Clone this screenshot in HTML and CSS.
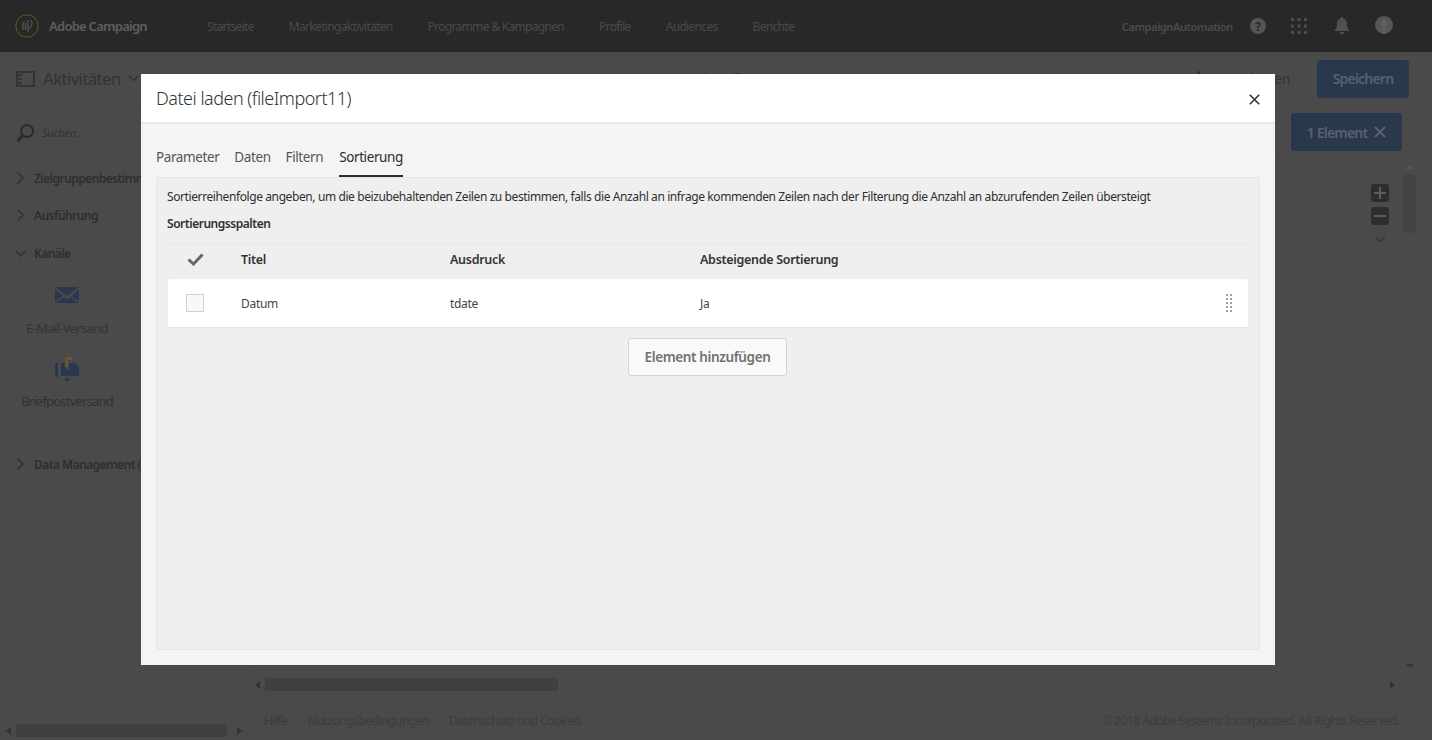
FILE: index.html
```html
<!DOCTYPE html>
<html lang="de">
<head>
<meta charset="utf-8">
<title>Adobe Campaign</title>
<link rel="stylesheet" href="styles.css">
</head>
<body>
<div class="app">
  <header class="topbar">
    <div class="brand">
      <svg class="logo" width="24" height="24" viewBox="0 0 24 24" fill="none"><circle cx="12" cy="12" r="11.200" stroke="#5a5f20" stroke-width="1"/><path d="M8 16V10c0-1.500 1-2.500 2-3M10.500 16V9M13 18V6M15 6c2 1 2.500 3 1.500 5.500S14 15 13 15" stroke="#5e5e5e" stroke-width="1"/></svg>
      <span class="brand-name">Adobe Campaign</span>
    </div>
    <nav class="mainnav">
      <span>Startseite</span><span>Marketingaktivitäten</span><span>Programme &amp; Kampagnen</span><span>Profile</span><span>Audiences</span><span>Berichte</span>
    </nav>
    <div class="top-right">
      <span class="org">CampaignAutomation</span>
      <span class="help">?</span>
      <svg class="grid-ic" width="16" height="16" viewBox="0 0 16 16" fill="#4c4c4c"><rect x="0" y="0" width="3" height="3"/><rect x="6.500" y="0" width="3" height="3"/><rect x="13" y="0" width="3" height="3"/><rect x="0" y="6.500" width="3" height="3"/><rect x="6.500" y="6.500" width="3" height="3"/><rect x="13" y="6.500" width="3" height="3"/><rect x="0" y="13" width="3" height="3"/><rect x="6.500" y="13" width="3" height="3"/><rect x="13" y="13" width="3" height="3"/></svg>
      <svg class="bell" width="16" height="18" viewBox="0 0 16 18" fill="#505050"><path d="M8 0c1 0 1.500.7 1.500 1.500C12 2.300 13 4.500 13 7c0 3 1 5 3 7H0c2-2 3-4 3-7 0-2.500 1-4.700 3.500-5.500C6.500.7 7 0 8 0zM6 15h4c0 1.500-1 2.500-2 2.500S6 16.500 6 15z"/></svg>
      <svg class="avatar" width="18" height="18" viewBox="0 0 18 18"><circle cx="9" cy="9" r="9" fill="#555"/><path d="M9 3.500c2 0 3 1.500 3 3.500 0 2-1 4-3 4S6 9 6 7c0-2 1-3.500 3-3.500zM7.500 11.500h3V18h-3z" fill="#606060"/></svg>
    </div>
  </header>

  <div class="workspace">
    <aside class="sidebar">
      <div class="side-head">
        <svg width="20" height="16" viewBox="0 0 20 16" fill="none"><rect x="1" y="1" width="17" height="14" stroke="#333" stroke-width="2"/><path d="M2 4h4M2 8h4M2 12h4" stroke="#333" stroke-width="2"/></svg>
        <span class="side-title">Aktivitäten</span>
        <svg width="11" height="7" viewBox="0 0 11 7" fill="none"><path d="M1 1l4.500 4.500L10 1" stroke="#333" stroke-width="1.500"/></svg>
      </div>
      <div class="search">
        <svg width="19" height="19" viewBox="0 0 19 19" fill="none"><circle cx="11" cy="8" r="6" stroke="#2b2b2b" stroke-width="2"/><path d="M7 12.500L1.500 18" stroke="#2b2b2b" stroke-width="3"/></svg>
        <span>Suchen...</span>
      </div>
      <div class="group"><svg class="chev" width="9" height="14" viewBox="0 0 9 14" fill="none"><path d="M1.500 1.500L7 7l-5.500 5.500" stroke="#333" stroke-width="1.600"/></svg><span>Zielgruppenbestimmung</span></div>
      <div class="group"><svg class="chev" width="9" height="14" viewBox="0 0 9 14" fill="none"><path d="M1.500 1.500L7 7l-5.500 5.500" stroke="#333" stroke-width="1.600"/></svg><span>Ausführung</span></div>
      <div class="group"><svg class="chev-d" width="13" height="9" viewBox="0 0 13 9" fill="none"><path d="M1.500 1.500L6.500 7l5-5.500" stroke="#333" stroke-width="1.600"/></svg><span>Kanäle</span></div>
      <div class="tile">
        <svg width="24" height="16" viewBox="0 0 24 16"><path d="M0 0h24L12 9z" fill="#2a384e"/><path d="M0 2.500l8 6.500-8 5.500zM24 2.500L16 9l8 5.500zM0 16l9-6 3 2.500 3-2.500 9 6z" fill="#2a384e"/></svg>
        <span>E-Mail-Versand</span>
      </div>
      <div class="tile tile-post">
        <svg width="24" height="24" viewBox="0 0 24 24"><rect x="0" y="6" width="3" height="14" fill="#2a384e"/><path d="M6 6h5v7h3V6h3c4 0 7 3 7 6v7H6z" fill="#2a384e"/><rect x="10" y="0" width="7" height="3" fill="#6b5230"/><rect x="10" y="0" width="3" height="10" fill="#6b5230"/><rect x="10" y="21" width="4" height="3" fill="#2a384e"/></svg>
        <span>Briefpostversand</span>
      </div>
      <div class="group group-data"><svg class="chev" width="9" height="14" viewBox="0 0 9 14" fill="none"><path d="M1.500 1.500L7 7l-5.500 5.500" stroke="#333" stroke-width="1.600"/></svg><span>Data Management (Datenverwaltung)</span></div>
      <div class="side-scroll"><i class="arrow-l"></i><b></b><i class="arrow-r"></i></div>
    </aside>

    <main class="canvas">
      <div class="toolbar">
        <span class="crumb">Workflow</span>
        <span class="undo"><svg width="16" height="18" viewBox="0 0 16 18" fill="#333"><path d="M9 0l7 6-7 6V8.500C5 8.500 2 10 0 14c.5-5 4-8.500 9-9z"/></svg>Ausführen</span>
        <button class="btn-primary btn-save">Speichern</button>
      </div>
      <div class="selbar">
        <button class="btn-primary btn-count">1 Element <svg width="12" height="12" viewBox="0 0 12 12" fill="none"><path d="M1 1l10 10M11 1L1 11" stroke="#59616b" stroke-width="2"/></svg></button>
      </div>
      <div class="stage">
        <div class="zoom-tools">
          <span class="zoom-btn"><svg width="18" height="18" viewBox="0 0 18 18"><path d="M8 3h2v5h5v2h-5v5H8v-5H3V8h5z" fill="#5d5d5d"/></svg></span>
          <span class="zoom-btn"><svg width="18" height="18" viewBox="0 0 18 18"><path d="M3 8h12v2H3z" fill="#5d5d5d"/></svg></span>
          <svg class="zoom-more" width="11" height="7" viewBox="0 0 11 7" fill="none"><path d="M1 1l4.500 4.500L10 1" stroke="#333" stroke-width="1.300"/></svg>
        </div>
        <div class="vscroll"><i class="arrow-u"></i><b></b><i class="arrow-d"></i></div>
      </div>
      <div class="hscroll"><i class="arrow-l"></i><b></b><i class="arrow-r"></i></div>
      <footer class="footer">
        <span>Hilfe</span><span>Nutzungsbedingungen</span><span>Datenschutz und Cookies</span>
        <span class="copy">© 2018 Adobe Systems Incorporated. All Rights Reserved.</span>
      </footer>
    </main>
  </div>
</div>

<section class="modal">
  <div class="modal-head">
    <h1>Datei laden (fileImport11)</h1>
    <svg class="close" width="11" height="11" viewBox="0 0 11 11" fill="none"><path d="M.8.800l9.400 9.400M10.200.800L.8 10.200" stroke="#333" stroke-width="1.600"/></svg>
  </div>
  <div class="modal-body">
    <div class="tabs">
      <span>Parameter</span><span>Daten</span><span>Filtern</span><span class="active">Sortierung</span>
    </div>
    <div class="panel">
      <p class="desc">Sortierreihenfolge angeben, um die beizubehaltenden Zeilen zu bestimmen, falls die Anzahl an infrage kommenden Zeilen nach der Filterung die Anzahl an abzurufenden Zeilen übersteigt</p>
      <h2>Sortierungsspalten</h2>
      <div class="thead row-grid">
        <svg class="check" width="17" height="13" viewBox="0 0 17 13" fill="none"><path d="M1.500 6.500l5 4.500L15.500 1.500" stroke="#666" stroke-width="3"/></svg>
        <span>Titel</span><span>Ausdruck</span><span>Absteigende Sortierung</span>
      </div>
      <div class="trow row-grid">
        <span class="cb"></span>
        <span>Datum</span><span>tdate</span><span>Ja</span>
        <svg class="handle" width="6" height="18" viewBox="0 0 6 18" fill="#a0a0a0"><rect x="0" y="0" width="2" height="2"/><rect x="4" y="0" width="2" height="2"/><rect x="0" y="4" width="2" height="2"/><rect x="4" y="4" width="2" height="2"/><rect x="0" y="8" width="2" height="2"/><rect x="4" y="8" width="2" height="2"/><rect x="0" y="12" width="2" height="2"/><rect x="4" y="12" width="2" height="2"/><rect x="0" y="16" width="2" height="2"/><rect x="4" y="16" width="2" height="2"/></svg>
      </div>
      <div class="add-wrap"><button class="btn-add">Element hinzufügen</button></div>
    </div>
  </div>
</section>
</body>
</html>
```

FILE: styles.css
```css
* { box-sizing: border-box; }
html, body { margin: 0; height: 740px; overflow: hidden; }
body { font-family: "Noto Sans", "Open Sans", sans-serif; background: #4a4a4a; color: #2e2e2e; }
button { font-family: inherit; }
.app { height: 740px; display: flex; flex-direction: column; }

.topbar { height: 52px; background: #282828; display: flex; align-items: center; padding-left: 15px; flex: none; }
.brand { display: flex; align-items: center; gap: 10px; width: 192px; }
.logo { flex: none; }
.brand-name { font-size: 13px; font-weight: 600; color: #5f5f5f; letter-spacing: -.74px; }
.mainnav { display: flex; gap: 35px; font-size: 12px; color: #4a4a4a; letter-spacing: -.68px; }
.top-right { margin-left: auto; display: flex; align-items: center; padding-right: 39px; }
.org { font-size: 11px; font-weight: 600; color: #4c4c4c; letter-spacing: -.4px; margin-right: 17px; }
.help { width: 16px; height: 16px; border-radius: 50%; background: #555; color: #282828; font-size: 12px; font-weight: 700; display: flex; align-items: center; justify-content: center; margin-right: 25px; }
.grid-ic { margin-right: 27px; }
.bell { margin-right: 25px; }
.avatar { margin-top: -3px; }

.workspace { flex: 1; display: flex; min-height: 0; }
.sidebar { width: 249px; flex: none; border-right: 1px solid #484848; position: relative; }
.side-head { height: 54px; display: flex; align-items: center; padding-left: 16px; gap: 7px; border-bottom: 1px solid #474747; }
.side-title { font-size: 17px; color: #333; letter-spacing: -.7px; }
.search { display: flex; align-items: center; gap: 7px; padding-left: 16px; height: 53px; font-size: 11px; font-style: italic; color: #333; letter-spacing: -.2px; }
.group { display: flex; align-items: center; height: 38px; padding-left: 16px; font-size: 12px; font-weight: 600; color: #2e2e2e; white-space: nowrap; letter-spacing: -.55px; overflow: hidden; }
.search + .group { height: 37px; padding-top: 1px; }
.group svg { flex: none; }
.group .chev { margin-right: 9px; }
.group .chev-d { margin-right: 7px; margin-left: -2px; }
.group-data { margin-top: 35px; }
.tile { width: 134px; display: flex; flex-direction: column; align-items: center; gap: 16px; font-size: 13px; color: #333; letter-spacing: -.7px; margin-top: 15px; }
.tile-post { margin-top: 20px; gap: 11px; letter-spacing: -.8px; }
.side-scroll { position: absolute; left: 0; right: 0; bottom: 3px; height: 13px; display: flex; align-items: center; padding: 0 6px; gap: 5px; }
.side-scroll b { width: 214px; height: 13px; background: #404040; }
.side-scroll .arrow-r { margin-left: 5px; }

.canvas { flex: 1; min-width: 0; display: flex; flex-direction: column; }
.toolbar { height: 54px; display: flex; align-items: center; justify-content: flex-end; padding-right: 23px; border-bottom: 1px solid #474747; color: #333; }
.crumb { margin-right: auto; margin-left: 441px; font-size: 17px; }
.undo { display: flex; align-items: center; gap: 20px; margin-right: 27px; font-size: 14px; letter-spacing: -.3px; }
.btn-primary { background: #2a384e; color: #59616b; border: 0; border-radius: 3px; font-size: 14px; font-weight: 600; letter-spacing: -.8px; padding: 0; }
.btn-save { width: 92px; height: 38px; }
.selbar { height: 53px; display: flex; align-items: center; justify-content: flex-end; padding-right: 30px; border-bottom: 1px solid #474747; }
.btn-count { width: 111px; height: 38px; display: flex; align-items: center; justify-content: center; gap: 7px; }
.stage { flex: 1; position: relative; min-height: 0; }
.zoom-tools { position: absolute; right: 43px; top: 25px; width: 18px; display: flex; flex-direction: column; align-items: center; gap: 5px; }
.zoom-btn { width: 18px; height: 18px; border-radius: 3px; background: #2e2e2e; display: block; }
.zoom-btn svg { display: block; }
.zoom-more { margin-top: 6px; }
.vscroll { position: absolute; right: 16px; top: 6px; bottom: 2px; width: 13px; display: flex; flex-direction: column; align-items: center; gap: 5px; }
.vscroll b { width: 13px; height: 59px; background: #444; }
.vscroll .arrow-d { margin-top: auto; }
.hscroll { height: 30px; display: flex; align-items: center; padding-left: 6px; gap: 5px; padding-right: 37px; border-bottom: 1px solid #474747; }
.hscroll b { width: 293px; height: 13px; background: #404040; }
.hscroll .arrow-r { margin-left: auto; }
.arrow-l, .arrow-r, .arrow-u, .arrow-d { width: 0; height: 0; display: block; flex: none; border: 4px solid transparent; }
.arrow-l { border-left-width: 0; border-right: 5px solid #333; }
.arrow-r { border-right-width: 0; border-left: 5px solid #333; }
.arrow-u { border-top-width: 0; border-bottom: 4px solid #585858; }
.arrow-d { border-bottom-width: 0; border-top: 4px solid #333; }
.footer { height: 40px; display: flex; align-items: center; gap: 20px; padding: 0 32px 0 15px; font-size: 12px; color: #3c3c3c; letter-spacing: -.47px; }
.copy { margin-left: auto; }

.modal { position: absolute; left: 141px; top: 74px; width: 1134px; height: 591px; background: #f4f4f4; display: flex; flex-direction: column; }
.modal-head { height: 50px; flex: none; background: #fff; border-bottom: 2px solid #e9e9e9; display: flex; align-items: center; justify-content: space-between; padding: 0 15px; }
.modal-head h1 { margin: -1px 0 0; font-size: 18px; font-weight: 300; color: #333; letter-spacing: -.5px; }
.close { margin-top: 2px; }
.modal-body { flex: 1; min-height: 0; padding: 0 15px 15px; display: flex; flex-direction: column; }
.tabs { height: 53px; flex: none; display: flex; align-items: flex-end; gap: 15px; font-size: 13.500px; color: #555; letter-spacing: -.4px; }
.tabs span { height: 29px; }
.tabs .active { color: #2c2c2c; border-bottom: 2px solid #2c2c2c; margin-left: 1px; }
.panel { flex: 1; min-height: 0; background: #efefef; border: 1px solid #e6e6e6; border-radius: 3px; padding: 0 10px; }
.desc { margin: 11px 0 0; font-size: 12px; line-height: 16px; color: #2f2f2f; white-space: nowrap; letter-spacing: -.4px; }
.panel h2 { margin: 11px 0 0; font-size: 12px; line-height: 16px; font-weight: 600; color: #2f2f2f; letter-spacing: -.47px; }
.row-grid { display: grid; grid-template-columns: 73px 209px 250px 1fr 40px; align-items: center; }
.thead { height: 36px; margin-top: 11px; padding: 0 1px 5px; border-top: 1px solid #e6e6e6; font-size: 12.500px; font-weight: 600; color: #333; letter-spacing: -.3px; }
.check { margin-left: 19px; }
.trow { height: 49px; margin: 0 1px; background: #fff; border-radius: 3px; border-bottom: 1px solid #e4e4e4; font-size: 12px; color: #444; letter-spacing: -.3px; }
.cb { width: 18px; height: 18px; margin-left: 18px; background: #f8f8f8; border: 1px solid #cfcfcf; }
.handle { justify-self: end; margin-right: 16px; }
.add-wrap { display: flex; justify-content: center; margin-top: 10px; padding-right: 1px; }
.btn-add { width: 159px; height: 38px; background: #f9f9f9; border: 1px solid #d4d4d4; border-radius: 3px; font-size: 13.500px; font-weight: 600; color: #707070; letter-spacing: -.37px; padding: 0; }
```
